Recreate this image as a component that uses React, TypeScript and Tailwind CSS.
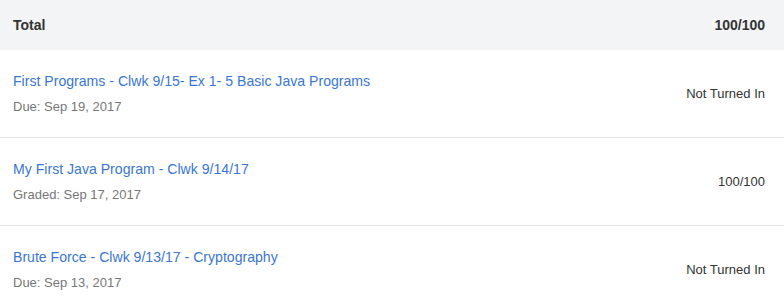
const rows = [
  { title: 'First Programs - Clwk 9/15- Ex 1- 5 Basic Java Programs', sub: 'Due: Sep 19, 2017', score: 'Not Turned In' },
  { title: 'My First Java Program - Clwk 9/14/17', sub: 'Graded: Sep 17, 2017', score: '100/100' },
  { title: 'Brute Force - Clwk 9/13/17 - Cryptography', sub: 'Due: Sep 13, 2017', score: 'Not Turned In' },
];

export default function App() {
  return (
    <div className="w-[784px] bg-white font-['Liberation_Sans',Arial,sans-serif] antialiased">
      <div className="flex h-[50px] items-center justify-between bg-[#f3f4f6] pl-[13px] pr-[19px] text-[14px] font-bold text-[#333]">
        <span>Total</span>
        <span>100/100</span>
      </div>
      {rows.map((r) => (
        <div
          key={r.title}
          className="flex items-center justify-between border-b border-[#e3e3e3] pb-5 pl-[13px] pr-[19px] pt-[21px]"
        >
          <div className="min-w-0">
            <div className="text-[14.1px] leading-5 text-[#3a76d4]">{r.title}</div>
            <div className="mt-1.5 text-[13px] leading-5 text-[#777]">{r.sub}</div>
          </div>
          <div className="text-[13px] text-[#333]">{r.score}</div>
        </div>
      ))}
    </div>
  );
}
